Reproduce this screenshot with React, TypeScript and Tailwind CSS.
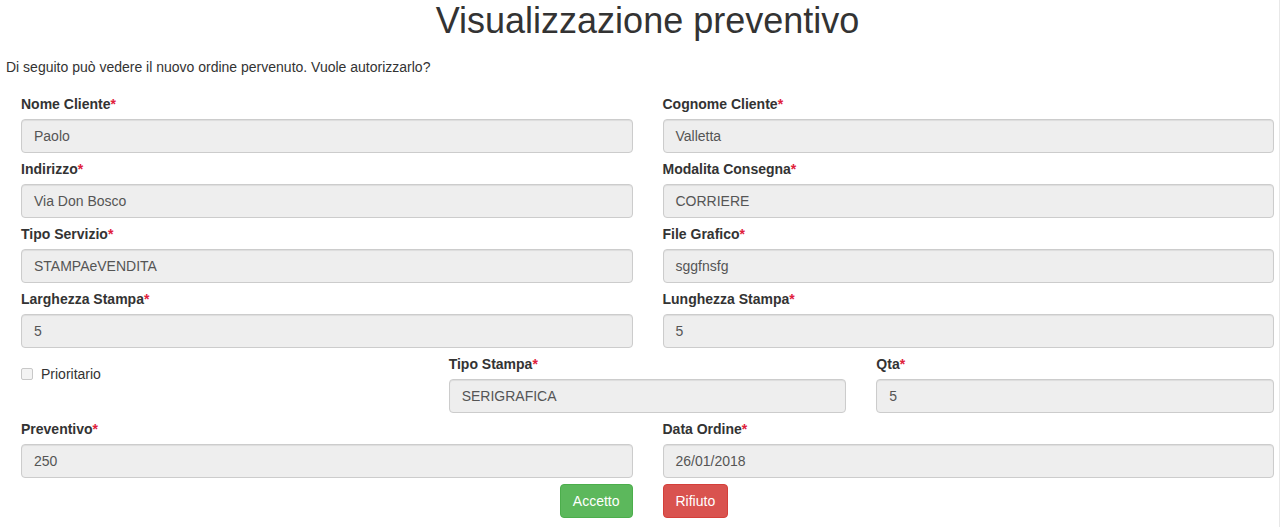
const fields: [string, string, string, string][] = [
  ['Nome Cliente', 'Paolo', 'Cognome Cliente', 'Valletta'],
  ['Indirizzo', 'Via Don Bosco', 'Modalita Consegna', 'CORRIERE'],
  ['Tipo Servizio', 'STAMPAeVENDITA', 'File Grafico', 'sggfnsfg'],
  ['Larghezza Stampa', '5', 'Lunghezza Stampa', '5'],
];

function Field({ label, value }: { label: string; value: string }) {
  return (
    <div className="mb-[6px]">
      <label className="block h-[20px] mb-[5px] text-[14px] leading-[20px] font-bold text-[#333]">
        {label}
        <span className="text-[#e0203c]">*</span>
      </label>
      <div className="h-[34px] rounded-[4px] border border-[#ccc] bg-[#eee] px-[12px] text-[14px] leading-[32px] text-[#555] shadow-[inset_0_1px_1px_rgba(0,0,0,0.075)]">
        {value}
      </div>
    </div>
  );
}

export default function App() {
  return (
    <div
      className="w-[1280px] h-[527px] overflow-hidden bg-white border-r border-[#e8e8e8]"
      style={{ fontFamily: "'Liberation Sans', Arial, sans-serif" }}
    >
      <h1 className="pt-[1px] ml-[21px] w-[1253px] text-center text-[36px] leading-[40px] font-normal text-[#333]">
        Visualizzazione preventivo
      </h1>
      <p className="mt-[16px] pl-[6px] text-[14px] leading-[20px] text-[#333]">
        Di seguito può vedere il nuovo ordine pervenuto. Vuole autorizzarlo?
      </p>

      <div className="mt-[17px] ml-[21px] w-[1253px]">
        {fields.map(([l1, v1, l2, v2]) => (
          <div key={l1} className="grid grid-cols-2 gap-x-[30px]">
            <Field label={l1} value={v1} />
            <Field label={l2} value={v2} />
          </div>
        ))}

        <div className="grid grid-cols-3 gap-x-[30px]">
          <div className="pt-[10px]">
            <label className="flex items-center h-[20px] text-[14px] leading-[20px] text-[#333]">
              <span className="inline-block w-[12px] h-[12px] mr-[8px] rounded-[2px] border border-[#c8c8c8] bg-[#f3f3f3]" />
              Prioritario
            </label>
          </div>
          <Field label="Tipo Stampa" value="SERIGRAFICA" />
          <Field label="Qta" value="5" />
        </div>

        <div className="grid grid-cols-2 gap-x-[30px]">
          <Field label="Preventivo" value="250" />
          <Field label="Data Ordine" value="26/01/2018" />
        </div>

        <div className="grid grid-cols-2 gap-x-[30px]">
          <div className="flex justify-end">
            <button className="h-[34px] px-[12px] rounded-[4px] border border-[#4cae4c] bg-[#5cb85c] text-[14px] text-white">
              Accetto
            </button>
          </div>
          <div className="flex justify-start">
            <button className="h-[34px] px-[12px] rounded-[4px] border border-[#d43f3a] bg-[#d9534f] text-[14px] text-white">
              Rifiuto
            </button>
          </div>
        </div>
      </div>
    </div>
  );
}
